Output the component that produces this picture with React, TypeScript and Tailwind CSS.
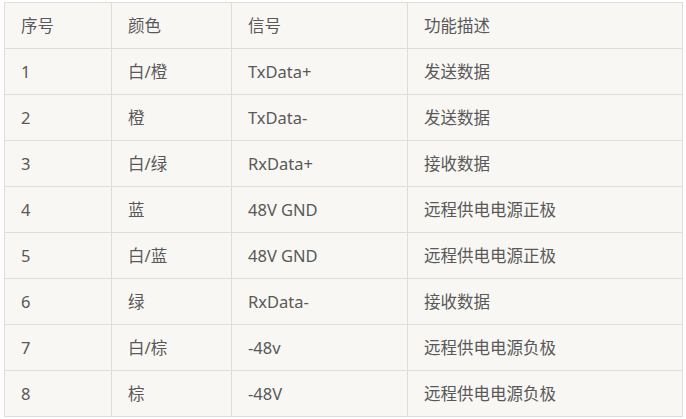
import React from "react";

const rows: [string, string, string, string][] = [
  ["1", "白/橙", "TxData+", "发送数据"],
  ["2", "橙", "TxData-", "发送数据"],
  ["3", "白/绿", "RxData+", "接收数据"],
  ["4", "蓝", "48V GND", "远程供电电源正极"],
  ["5", "白/蓝", "48V GND", "远程供电电源正极"],
  ["6", "绿", "RxData-", "接收数据"],
  ["7", "白/棕", "-48v", "远程供电电源负极"],
  ["8", "棕", "-48V", "远程供电电源负极"],
];

const cell =
  "border border-[#dddddd] h-[46px] px-[16px] py-0 text-left align-middle font-normal";

export default function App() {
  return (
    <div className="w-[686px] h-[419px] bg-white pt-[2px] pl-[4px]">
      <table
        className="border-collapse table-fixed w-[678px] bg-[#f8f7f4] text-[#595959] text-[16.5px] leading-[24px]"
        style={{ fontFamily: '"Noto Sans", "Noto Sans CJK SC", sans-serif' }}
      >
        <colgroup>
          <col className="w-[107px]" />
          <col className="w-[120px]" />
          <col className="w-[176px]" />
          <col className="w-[275px]" />
        </colgroup>
        <thead>
          <tr>
            <th className={cell}>序号</th>
            <th className={cell}>颜色</th>
            <th className={cell}>信号</th>
            <th className={cell}>功能描述</th>
          </tr>
        </thead>
        <tbody>
          {rows.map((r) => (
            <tr key={r[0]}>
              {r.map((c, i) => (
                <td key={i} className={cell}>
                  {c}
                </td>
              ))}
            </tr>
          ))}
        </tbody>
      </table>
    </div>
  );
}
